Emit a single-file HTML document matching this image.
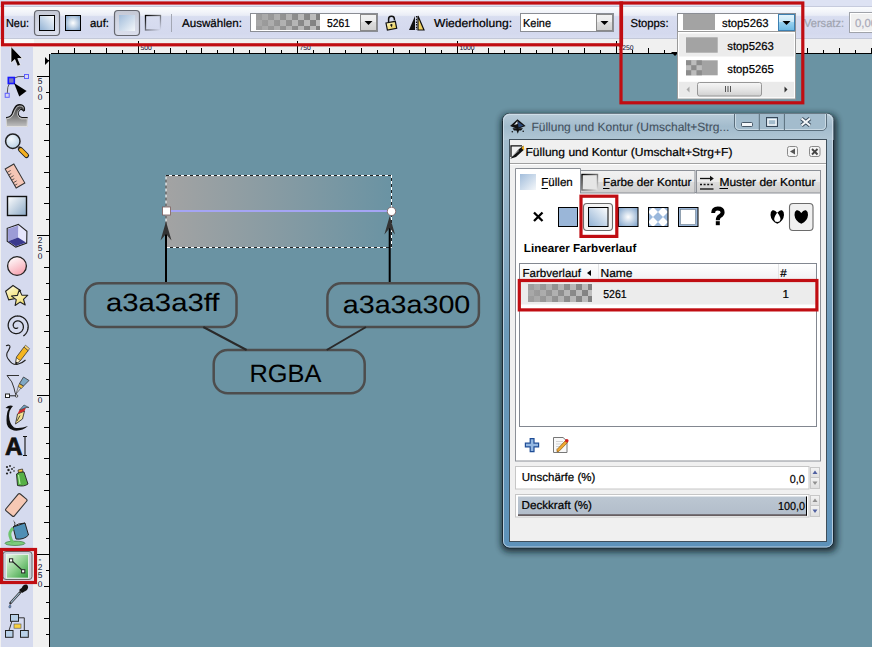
<!DOCTYPE html>
<html><head><meta charset="utf-8"><style>
html,body{margin:0;padding:0;width:872px;height:647px;overflow:hidden;background:#6a93a3;}
svg{display:block;}
</style></head><body>
<svg width="872" height="647" viewBox="0 0 872 647" shape-rendering="auto" text-rendering="geometricPrecision">
<defs>
<linearGradient id="tbg" x1="0" y1="0" x2="0" y2="1">
  <stop offset="0" stop-color="#fafbfd"/><stop offset="0.15" stop-color="#f3f5fa"/>
  <stop offset="0.27" stop-color="#e9ecf6"/><stop offset="0.31" stop-color="#d8ddf0"/>
  <stop offset="0.85" stop-color="#d4d9ee"/><stop offset="1" stop-color="#d8ddf0"/>
</linearGradient>
<linearGradient id="lin" x1="0" y1="1" x2="1" y2="0">
  <stop offset="0" stop-color="#8fb0d3"/><stop offset="1" stop-color="#ffffff"/>
</linearGradient>
<linearGradient id="linsoft" x1="0" y1="0" x2="1" y2="1">
  <stop offset="0" stop-color="#a2bddb"/><stop offset="1" stop-color="#f4f7fa"/>
</linearGradient>
<radialGradient id="rad" cx="0.5" cy="0.5" r="0.6">
  <stop offset="0" stop-color="#ffffff"/><stop offset="1" stop-color="#88a9cd"/>
</radialGradient>
<linearGradient id="pressbtn" x1="0" y1="0" x2="0" y2="1">
  <stop offset="0" stop-color="#c4c8d4"/><stop offset="0.5" stop-color="#d3d7e4"/><stop offset="1" stop-color="#dadeec"/>
</linearGradient>
<linearGradient id="strokeic" x1="0" y1="0" x2="1" y2="1">
  <stop offset="0" stop-color="#000"/><stop offset="1" stop-color="#000" stop-opacity="0"/>
</linearGradient>
<pattern id="chk" x="256" y="14" width="12" height="12" patternUnits="userSpaceOnUse">
  <rect width="12" height="12" fill="#bfbfbf"/><rect width="6" height="6" fill="#808080"/><rect x="6" y="6" width="6" height="6" fill="#808080"/>
</pattern>
<linearGradient id="fadegray" x1="0" y1="0" x2="1" y2="0">
  <stop offset="0" stop-color="#a3a3a3" stop-opacity="0.88"/><stop offset="1" stop-color="#a3a3a3" stop-opacity="0"/>
</linearGradient>
<linearGradient id="objgrad" x1="0" y1="0" x2="1" y2="0">
  <stop offset="0" stop-color="#a3a3a3" stop-opacity="1"/><stop offset="1" stop-color="#a3a3a3" stop-opacity="0"/>
</linearGradient>
<linearGradient id="ddbtn" x1="0" y1="0" x2="0" y2="1">
  <stop offset="0" stop-color="#f2f2f2"/><stop offset="0.5" stop-color="#ebebeb"/><stop offset="0.5" stop-color="#dddddd"/><stop offset="1" stop-color="#cfcfcf"/>
</linearGradient>
<linearGradient id="ddbtnhot" x1="0" y1="0" x2="0" y2="1">
  <stop offset="0" stop-color="#e5f4fc"/><stop offset="0.5" stop-color="#c4e5f6"/><stop offset="0.5" stop-color="#98d1ef"/><stop offset="1" stop-color="#6cb8e4"/>
</linearGradient>
<linearGradient id="title" x1="0" y1="0" x2="0" y2="1">
  <stop offset="0" stop-color="#b9ccd9"/><stop offset="0.5" stop-color="#a2bbcc"/><stop offset="1" stop-color="#b0c6d4"/>
</linearGradient>
<linearGradient id="frameside" x1="0" y1="0" x2="0" y2="1">
  <stop offset="0" stop-color="#a9c0d0"/><stop offset="0.15" stop-color="#9ab6c9"/><stop offset="0.5" stop-color="#6c9aba"/><stop offset="1" stop-color="#5d92ba"/>
</linearGradient>
<linearGradient id="tabbg" x1="0" y1="0" x2="0" y2="1">
  <stop offset="0" stop-color="#f2f2f2"/><stop offset="0.5" stop-color="#ebebeb"/><stop offset="0.5" stop-color="#dddddd"/><stop offset="1" stop-color="#cfcfcf"/>
</linearGradient>
<linearGradient id="hdrbg" x1="0" y1="0" x2="0" y2="1">
  <stop offset="0" stop-color="#ffffff"/><stop offset="1" stop-color="#f1f2f4"/>
</linearGradient>
<linearGradient id="scrthumb" x1="0" y1="0" x2="0" y2="1">
  <stop offset="0" stop-color="#f6f6f6"/><stop offset="0.5" stop-color="#e6e6e6"/><stop offset="1" stop-color="#d0d0d0"/>
</linearGradient>
<linearGradient id="greenic" x1="0" y1="0" x2="1" y2="1">
  <stop offset="0" stop-color="#e8f6e8"/><stop offset="0.5" stop-color="#8fd08f"/><stop offset="1" stop-color="#2f9a3a"/>
</linearGradient>
<linearGradient id="rectg" x1="0" y1="0" x2="1" y2="1">
  <stop offset="0" stop-color="#ffffff"/><stop offset="1" stop-color="#8aa8c6"/>
</linearGradient>
<radialGradient id="lensg" cx="0.4" cy="0.35" r="0.7">
  <stop offset="0" stop-color="#f4f8fc"/><stop offset="1" stop-color="#b8d0e4"/>
</radialGradient>
<linearGradient id="yel2" x1="0" y1="0" x2="0.6" y2="1">
  <stop offset="0" stop-color="#fffce8"/><stop offset="1" stop-color="#f2e070"/>
</linearGradient>
<linearGradient id="waveg" x1="0" y1="0" x2="0" y2="1">
  <stop offset="0" stop-color="#333"/><stop offset="0.5" stop-color="#777"/><stop offset="1" stop-color="#c4c4c4"/>
</linearGradient>
<linearGradient id="boxg" x1="0" y1="0" x2="1" y2="1">
  <stop offset="0" stop-color="#f0f0ff"/><stop offset="0.5" stop-color="#c0c0ec"/><stop offset="1" stop-color="#6060b0"/>
</linearGradient>
<linearGradient id="circg" x1="0.2" y1="0" x2="0.7" y2="1">
  <stop offset="0" stop-color="#ffffff"/><stop offset="1" stop-color="#f6a0ae"/>
</linearGradient>
<linearGradient id="yel" x1="0" y1="0" x2="1" y2="1">
  <stop offset="0" stop-color="#fffbd0"/><stop offset="1" stop-color="#e8c840"/>
</linearGradient>
<linearGradient id="spinbtn" x1="0" y1="0" x2="0" y2="1">
  <stop offset="0" stop-color="#f4f4f4"/><stop offset="1" stop-color="#dedede"/>
</linearGradient>

<filter id="shadow" x="-10%" y="-10%" width="120%" height="120%">
  <feGaussianBlur stdDeviation="3"/>
</filter>
<pattern id="chk6" x="528" y="284" width="12" height="12" patternUnits="userSpaceOnUse">
  <rect width="12" height="12" fill="#bfbfbf"/><rect width="6" height="6" fill="#808080"/><rect x="6" y="6" width="6" height="6" fill="#808080"/>
</pattern>
<linearGradient id="fadegray2" x1="0" y1="0" x2="1" y2="0">
  <stop offset="0" stop-color="#a3a3a3" stop-opacity="0.88"/><stop offset="1" stop-color="#a3a3a3" stop-opacity="0"/>
</linearGradient>
<pattern id="diam" x="648" y="207" width="10" height="10" patternUnits="userSpaceOnUse">
  <rect width="10" height="10" fill="#9ab8dc"/><path d="M5 0 L10 5 L5 10 L0 5 Z" fill="#fff"/>
</pattern>
<linearGradient id="deckbar" x1="0" y1="0" x2="0" y2="1">
  <stop offset="0" stop-color="#bcc7d2"/><stop offset="1" stop-color="#b2bdca"/>
</linearGradient>
</defs>
<rect x="0" y="0" width="872" height="647" fill="#6a93a3" />
<rect x="0" y="0" width="872" height="6" fill="#dde2f3" />
<rect x="0" y="6" width="872" height="1" fill="#c6cbdd" />
<rect x="0" y="7" width="872" height="31" fill="url(#tbg)" />
<rect x="0" y="38" width="872" height="1" fill="#c3c8d8" />
<rect x="0" y="39" width="872" height="15" fill="#f0f0f0" />
<rect x="0" y="39" width="34" height="8" fill="#fafafa" />
<text x="6" y="27" font-family="'Liberation Sans', sans-serif" font-size="11.5" fill="#000" font-weight="normal" text-anchor="start" textLength="23" lengthAdjust="spacingAndGlyphs" stroke="#000" stroke-width="0.22">Neu:</text>
<rect x="34.5" y="10.5" width="25" height="25" rx="3.5" fill="url(#pressbtn)" stroke="#65676f" stroke-width="1.2"/>
<rect x="39.5" y="15.5" width="15" height="15" fill="url(#lin)" stroke="#000" stroke-width="1"/>
<rect x="65.5" y="15.5" width="15" height="15" fill="url(#rad)" stroke="#000" stroke-width="1"/>
<text x="90" y="27" font-family="'Liberation Sans', sans-serif" font-size="11.5" fill="#000" font-weight="normal" text-anchor="start" textLength="19" lengthAdjust="spacingAndGlyphs" stroke="#000" stroke-width="0.22">auf:</text>
<rect x="114.5" y="10.5" width="25" height="25" rx="3.5" fill="url(#pressbtn)" stroke="#65676f" stroke-width="1.2"/>
<rect x="119" y="15" width="16" height="16" fill="url(#linsoft)"/>
<rect x="145.5" y="15.5" width="15" height="14.5" fill="none" stroke="url(#strokeic)" stroke-width="1.3"/>
<rect x="171" y="14" width="1" height="18" fill="#a3a7b3" />
<text x="182" y="27" font-family="'Liberation Sans', sans-serif" font-size="11.5" fill="#000" font-weight="normal" text-anchor="start" textLength="60" lengthAdjust="spacingAndGlyphs" stroke="#000" stroke-width="0.22">Auswählen:</text>
<rect x="250.5" y="13.5" width="127" height="18" fill="#fff" stroke="#8a8d94" stroke-width="1"/>
<rect x="256" y="14" width="64" height="16" fill="url(#chk)"/>
<rect x="256" y="14" width="64" height="16" fill="url(#fadegray)"/>
<text x="327" y="27" font-family="'Liberation Sans', sans-serif" font-size="11.5" fill="#000" font-weight="normal" text-anchor="start" textLength="23" lengthAdjust="spacingAndGlyphs" stroke="#000" stroke-width="0.22">5261</text>
<rect x="360.5" y="14.5" width="16" height="16" fill="url(#ddbtn)" stroke="#8a8a8a" stroke-width="1"/>
<path d="M364.5 21 h8 l-4 4 z" fill="#000"/>
<path d="M388.6 22.3 V19.2 a2.9 2.9 0 0 1 5.8 -0.3 V20.2" fill="none" stroke="#111" stroke-width="1.5"/>
<path d="M386 23 L395.3 21.3 L396.7 28.3 L387.4 30 Z" fill="url(#yel)" stroke="#111" stroke-width="1.2"/>
<circle cx="391.4" cy="25" r="1.1" fill="#111"/><path d="M391.2 25 L391.8 27.2" stroke="#111" stroke-width="0.9"/>
<path d="M409 30 L415 16 L415 30 z" fill="#111"/>
<path d="M418 30 L418 16 L424 30 z" fill="#f0d060" stroke="#111" stroke-width="1.2"/>
<line x1="416.5" y1="16" x2="416.5" y2="30" stroke="#111" stroke-width="1.2" stroke-dasharray="1.5 1.2"/>
<text x="434" y="27" font-family="'Liberation Sans', sans-serif" font-size="11.5" fill="#000" font-weight="normal" text-anchor="start" textLength="78" lengthAdjust="spacingAndGlyphs" stroke="#000" stroke-width="0.22">Wiederholung:</text>
<rect x="520.5" y="13.5" width="93" height="18" fill="#fff" stroke="#8a8d94" stroke-width="1"/>
<text x="523" y="27" font-family="'Liberation Sans', sans-serif" font-size="11.5" fill="#000" font-weight="normal" text-anchor="start" textLength="28" lengthAdjust="spacingAndGlyphs" stroke="#000" stroke-width="0.22">Keine</text>
<rect x="596.5" y="14.5" width="16" height="16" fill="url(#ddbtn)" stroke="#8a8a8a" stroke-width="1"/>
<path d="M600.5 21 h8 l-4 4 z" fill="#000"/>
<text x="630.5" y="27" font-family="'Liberation Sans', sans-serif" font-size="11.5" fill="#000" font-weight="normal" text-anchor="start" textLength="38" lengthAdjust="spacingAndGlyphs" stroke="#000" stroke-width="0.22">Stopps:</text>
<rect x="677.5" y="13.5" width="118" height="18" fill="#fff" stroke="#8a8d94" stroke-width="1"/>
<rect x="683" y="14" width="32" height="16" fill="#a3a3a3" />
<text x="722" y="27" font-family="'Liberation Sans', sans-serif" font-size="11.5" fill="#000" font-weight="normal" text-anchor="start" textLength="46.5" lengthAdjust="spacingAndGlyphs" stroke="#000" stroke-width="0.22">stop5263</text>
<rect x="778.5" y="14.5" width="16" height="16" fill="url(#ddbtnhot)" stroke="#3c7fb1" stroke-width="1"/>
<path d="M782.5 21 h8 l-4 4 z" fill="#000"/>
<text x="804" y="27" font-family="'Liberation Sans', sans-serif" font-size="11.5" fill="#a0a4b0" font-weight="normal" text-anchor="start" textLength="40" lengthAdjust="spacingAndGlyphs" stroke="#a0a4b0" stroke-width="0.22">Versatz:</text>
<rect x="849.5" y="12.5" width="40" height="20" fill="#f0f0f0" stroke="#a0a3aa" stroke-width="1"/>
<rect x="850.5" y="13.5" width="40" height="18" fill="none" stroke="#fff" stroke-width="1"/>
<text x="855" y="27" font-family="'Liberation Sans', sans-serif" font-size="11.5" fill="#a9a9b9" font-weight="normal" text-anchor="start" textLength="22" lengthAdjust="spacingAndGlyphs" stroke="#a9a9b9" stroke-width="0.22">0,00</text>
<rect x="51" y="53" width="821" height="1" fill="#000" />
<line x1="58.5" y1="50" x2="58.5" y2="53" stroke="#000" stroke-width="1" />
<line x1="74.5" y1="48" x2="74.5" y2="53" stroke="#000" stroke-width="1" />
<line x1="90.5" y1="50" x2="90.5" y2="53" stroke="#000" stroke-width="1" />
<line x1="106.5" y1="48" x2="106.5" y2="53" stroke="#000" stroke-width="1" />
<line x1="122.5" y1="50" x2="122.5" y2="53" stroke="#000" stroke-width="1" />
<line x1="138.5" y1="41" x2="138.5" y2="53" stroke="#000" stroke-width="1" />
<text x="140.5" y="50" font-family="'Liberation Sans', sans-serif" font-size="6.8" fill="#101030" font-weight="normal" text-anchor="start" stroke="#101030" stroke-width="0.05">500</text>
<line x1="154.5" y1="50" x2="154.5" y2="53" stroke="#000" stroke-width="1" />
<line x1="170.5" y1="48" x2="170.5" y2="53" stroke="#000" stroke-width="1" />
<line x1="186.5" y1="50" x2="186.5" y2="53" stroke="#000" stroke-width="1" />
<line x1="201.5" y1="48" x2="201.5" y2="53" stroke="#000" stroke-width="1" />
<line x1="217.5" y1="50" x2="217.5" y2="53" stroke="#000" stroke-width="1" />
<line x1="233.5" y1="48" x2="233.5" y2="53" stroke="#000" stroke-width="1" />
<line x1="249.5" y1="50" x2="249.5" y2="53" stroke="#000" stroke-width="1" />
<line x1="265.5" y1="48" x2="265.5" y2="53" stroke="#000" stroke-width="1" />
<line x1="281.5" y1="50" x2="281.5" y2="53" stroke="#000" stroke-width="1" />
<line x1="297.5" y1="41" x2="297.5" y2="53" stroke="#000" stroke-width="1" />
<text x="299.5" y="50" font-family="'Liberation Sans', sans-serif" font-size="6.8" fill="#101030" font-weight="normal" text-anchor="start" stroke="#101030" stroke-width="0.05">750</text>
<line x1="313.5" y1="50" x2="313.5" y2="53" stroke="#000" stroke-width="1" />
<line x1="329.5" y1="48" x2="329.5" y2="53" stroke="#000" stroke-width="1" />
<line x1="345.5" y1="50" x2="345.5" y2="53" stroke="#000" stroke-width="1" />
<line x1="361.5" y1="48" x2="361.5" y2="53" stroke="#000" stroke-width="1" />
<line x1="377.5" y1="50" x2="377.5" y2="53" stroke="#000" stroke-width="1" />
<line x1="393.5" y1="48" x2="393.5" y2="53" stroke="#000" stroke-width="1" />
<line x1="409.5" y1="50" x2="409.5" y2="53" stroke="#000" stroke-width="1" />
<line x1="425.5" y1="48" x2="425.5" y2="53" stroke="#000" stroke-width="1" />
<line x1="441.5" y1="50" x2="441.5" y2="53" stroke="#000" stroke-width="1" />
<line x1="457.5" y1="41" x2="457.5" y2="53" stroke="#000" stroke-width="1" />
<text x="459.5" y="50" font-family="'Liberation Sans', sans-serif" font-size="6.8" fill="#101030" font-weight="normal" text-anchor="start" stroke="#101030" stroke-width="0.05">1000</text>
<line x1="472.5" y1="50" x2="472.5" y2="53" stroke="#000" stroke-width="1" />
<line x1="488.5" y1="48" x2="488.5" y2="53" stroke="#000" stroke-width="1" />
<line x1="504.5" y1="50" x2="504.5" y2="53" stroke="#000" stroke-width="1" />
<line x1="520.5" y1="48" x2="520.5" y2="53" stroke="#000" stroke-width="1" />
<line x1="536.5" y1="50" x2="536.5" y2="53" stroke="#000" stroke-width="1" />
<line x1="552.5" y1="48" x2="552.5" y2="53" stroke="#000" stroke-width="1" />
<line x1="568.5" y1="50" x2="568.5" y2="53" stroke="#000" stroke-width="1" />
<line x1="584.5" y1="48" x2="584.5" y2="53" stroke="#000" stroke-width="1" />
<line x1="600.5" y1="50" x2="600.5" y2="53" stroke="#000" stroke-width="1" />
<line x1="616.5" y1="41" x2="616.5" y2="53" stroke="#000" stroke-width="1" />
<text x="618.5" y="50" font-family="'Liberation Sans', sans-serif" font-size="6.8" fill="#101030" font-weight="normal" text-anchor="start" stroke="#101030" stroke-width="0.05">1250</text>
<line x1="632.5" y1="50" x2="632.5" y2="53" stroke="#000" stroke-width="1" />
<line x1="648.5" y1="48" x2="648.5" y2="53" stroke="#000" stroke-width="1" />
<line x1="664.5" y1="50" x2="664.5" y2="53" stroke="#000" stroke-width="1" />
<line x1="680.5" y1="48" x2="680.5" y2="53" stroke="#000" stroke-width="1" />
<line x1="696.5" y1="50" x2="696.5" y2="53" stroke="#000" stroke-width="1" />
<line x1="712.5" y1="48" x2="712.5" y2="53" stroke="#000" stroke-width="1" />
<line x1="727.5" y1="50" x2="727.5" y2="53" stroke="#000" stroke-width="1" />
<line x1="743.5" y1="48" x2="743.5" y2="53" stroke="#000" stroke-width="1" />
<line x1="759.5" y1="50" x2="759.5" y2="53" stroke="#000" stroke-width="1" />
<line x1="775.5" y1="41" x2="775.5" y2="53" stroke="#000" stroke-width="1" />
<text x="777.5" y="50" font-family="'Liberation Sans', sans-serif" font-size="6.8" fill="#101030" font-weight="normal" text-anchor="start" stroke="#101030" stroke-width="0.05">1500</text>
<line x1="791.5" y1="50" x2="791.5" y2="53" stroke="#000" stroke-width="1" />
<line x1="807.5" y1="48" x2="807.5" y2="53" stroke="#000" stroke-width="1" />
<line x1="823.5" y1="50" x2="823.5" y2="53" stroke="#000" stroke-width="1" />
<line x1="839.5" y1="48" x2="839.5" y2="53" stroke="#000" stroke-width="1" />
<line x1="855.5" y1="50" x2="855.5" y2="53" stroke="#000" stroke-width="1" />
<line x1="871.5" y1="48" x2="871.5" y2="53" stroke="#000" stroke-width="1" />
<path d="M671 52 h8 l-4 4 z" fill="#000"/>
<rect x="33" y="54" width="17" height="593" fill="#f0f0f0" />
<rect x="49" y="54" width="1" height="593" fill="#000" />
<line x1="46" y1="60.5" x2="49" y2="60.5" stroke="#000" stroke-width="1" />
<line x1="37" y1="76.5" x2="49" y2="76.5" stroke="#000" stroke-width="1" />
<text x="40" y="83.7" font-family="'Liberation Sans', sans-serif" font-size="8.3" fill="#101030" font-weight="normal" text-anchor="middle" stroke="#101030" stroke-width="0.05">5</text>
<text x="40" y="92.05" font-family="'Liberation Sans', sans-serif" font-size="8.3" fill="#101030" font-weight="normal" text-anchor="middle" stroke="#101030" stroke-width="0.05">0</text>
<text x="40" y="100.4" font-family="'Liberation Sans', sans-serif" font-size="8.3" fill="#101030" font-weight="normal" text-anchor="middle" stroke="#101030" stroke-width="0.05">0</text>
<line x1="46" y1="92.5" x2="49" y2="92.5" stroke="#000" stroke-width="1" />
<line x1="44" y1="108.5" x2="49" y2="108.5" stroke="#000" stroke-width="1" />
<line x1="46" y1="124.5" x2="49" y2="124.5" stroke="#000" stroke-width="1" />
<line x1="44" y1="140.5" x2="49" y2="140.5" stroke="#000" stroke-width="1" />
<line x1="46" y1="156.5" x2="49" y2="156.5" stroke="#000" stroke-width="1" />
<line x1="44" y1="172.5" x2="49" y2="172.5" stroke="#000" stroke-width="1" />
<line x1="46" y1="187.5" x2="49" y2="187.5" stroke="#000" stroke-width="1" />
<line x1="44" y1="203.5" x2="49" y2="203.5" stroke="#000" stroke-width="1" />
<line x1="46" y1="219.5" x2="49" y2="219.5" stroke="#000" stroke-width="1" />
<line x1="37" y1="235.5" x2="49" y2="235.5" stroke="#000" stroke-width="1" />
<text x="40" y="242.7" font-family="'Liberation Sans', sans-serif" font-size="8.3" fill="#101030" font-weight="normal" text-anchor="middle" stroke="#101030" stroke-width="0.05">2</text>
<text x="40" y="251.04999999999998" font-family="'Liberation Sans', sans-serif" font-size="8.3" fill="#101030" font-weight="normal" text-anchor="middle" stroke="#101030" stroke-width="0.05">5</text>
<text x="40" y="259.4" font-family="'Liberation Sans', sans-serif" font-size="8.3" fill="#101030" font-weight="normal" text-anchor="middle" stroke="#101030" stroke-width="0.05">0</text>
<line x1="46" y1="251.5" x2="49" y2="251.5" stroke="#000" stroke-width="1" />
<line x1="44" y1="267.5" x2="49" y2="267.5" stroke="#000" stroke-width="1" />
<line x1="46" y1="283.5" x2="49" y2="283.5" stroke="#000" stroke-width="1" />
<line x1="44" y1="299.5" x2="49" y2="299.5" stroke="#000" stroke-width="1" />
<line x1="46" y1="315.5" x2="49" y2="315.5" stroke="#000" stroke-width="1" />
<line x1="44" y1="331.5" x2="49" y2="331.5" stroke="#000" stroke-width="1" />
<line x1="46" y1="347.5" x2="49" y2="347.5" stroke="#000" stroke-width="1" />
<line x1="44" y1="363.5" x2="49" y2="363.5" stroke="#000" stroke-width="1" />
<line x1="46" y1="379.5" x2="49" y2="379.5" stroke="#000" stroke-width="1" />
<line x1="37" y1="395.5" x2="49" y2="395.5" stroke="#000" stroke-width="1" />
<text x="40" y="402.7" font-family="'Liberation Sans', sans-serif" font-size="8.3" fill="#101030" font-weight="normal" text-anchor="middle" stroke="#101030" stroke-width="0.05">0</text>
<line x1="46" y1="411.5" x2="49" y2="411.5" stroke="#000" stroke-width="1" />
<line x1="44" y1="427.5" x2="49" y2="427.5" stroke="#000" stroke-width="1" />
<line x1="46" y1="443.5" x2="49" y2="443.5" stroke="#000" stroke-width="1" />
<line x1="44" y1="458.5" x2="49" y2="458.5" stroke="#000" stroke-width="1" />
<line x1="46" y1="474.5" x2="49" y2="474.5" stroke="#000" stroke-width="1" />
<line x1="44" y1="490.5" x2="49" y2="490.5" stroke="#000" stroke-width="1" />
<line x1="46" y1="506.5" x2="49" y2="506.5" stroke="#000" stroke-width="1" />
<line x1="44" y1="522.5" x2="49" y2="522.5" stroke="#000" stroke-width="1" />
<line x1="46" y1="538.5" x2="49" y2="538.5" stroke="#000" stroke-width="1" />
<line x1="37" y1="554.5" x2="49" y2="554.5" stroke="#000" stroke-width="1" />
<text x="40" y="561.7" font-family="'Liberation Sans', sans-serif" font-size="8.3" fill="#101030" font-weight="normal" text-anchor="middle" stroke="#101030" stroke-width="0.05">-</text>
<text x="40" y="570.0500000000001" font-family="'Liberation Sans', sans-serif" font-size="8.3" fill="#101030" font-weight="normal" text-anchor="middle" stroke="#101030" stroke-width="0.05">2</text>
<text x="40" y="578.4000000000001" font-family="'Liberation Sans', sans-serif" font-size="8.3" fill="#101030" font-weight="normal" text-anchor="middle" stroke="#101030" stroke-width="0.05">5</text>
<text x="40" y="586.75" font-family="'Liberation Sans', sans-serif" font-size="8.3" fill="#101030" font-weight="normal" text-anchor="middle" stroke="#101030" stroke-width="0.05">0</text>
<line x1="46" y1="570.5" x2="49" y2="570.5" stroke="#000" stroke-width="1" />
<line x1="44" y1="586.5" x2="49" y2="586.5" stroke="#000" stroke-width="1" />
<line x1="46" y1="602.5" x2="49" y2="602.5" stroke="#000" stroke-width="1" />
<line x1="44" y1="618.5" x2="49" y2="618.5" stroke="#000" stroke-width="1" />
<line x1="46" y1="634.5" x2="49" y2="634.5" stroke="#000" stroke-width="1" />
<path d="M45 57 v8 l4 -4 z" fill="#000"/>
<rect x="1" y="47" width="32" height="600" fill="#d5daee" />
<rect x="0" y="47" width="1" height="600" fill="#f0f0f0" />
<path d="M11 46.5 L11 63 L14.8 59.5 L17.5 66.2 L20.5 65 L17.8 58.5 L22.5 58.5 Z" fill="#000" stroke="#fff" stroke-width="0.7"/>
<path d="M12 79 Q18 75.5 24.5 76.5" fill="none" stroke="#555" stroke-width="1"/>
<path d="M10 82 Q7 87 7.3 93" fill="none" stroke="#555" stroke-width="1"/>
<rect x="8.3" y="77.5" width="6" height="6" fill="#7a7ac0" stroke="#1818ff" stroke-width="1.6"/>
<rect x="24.5" y="74.5" width="4" height="4" fill="#d8d8ee" stroke="#6060ff" stroke-width="1"/>
<rect x="5.2" y="93.3" width="4" height="4" fill="#d8d8ee" stroke="#6060ff" stroke-width="1"/>
<path d="M14 83 L26.6 91.1 L19.3 96.5 Z" fill="#000"/>
<path d="M6 127 V117.5 Q10 117.5 12 114 Q14 108 16.5 105.5 Q19 104 22 105 Q25 106.5 24.5 110.5 L23.5 111 Q21.5 108.5 19.5 110 Q17.5 112 18.5 115 Q19.5 117.5 22 117.5 H27.6 V127 Z" fill="url(#waveg)"/>
<path d="M6 117.5 Q10 117.5 12 114 Q14 108 16.5 105.5 Q19 104 22 105 Q25 106.5 24.5 110.5 L23.5 111 Q21.5 108.5 19.5 110 Q17.5 112 18.5 115 Q19.5 117.5 22 117.5 H27.6" fill="none" stroke="#111" stroke-width="1.1"/><path d="M6.5 126.5 H27.2 V118.5 M6.5 126.5 V118.5" fill="none" stroke="#fff" stroke-width="0.6" opacity="0.8"/>
<path d="M7 118.8 Q11 118.5 13 115 Q15 109 17.2 106.8 Q19.5 105.5 22 106.3 Q23.3 107 23.6 108.5 M20.5 108.8 Q17 110.5 17.5 114.5 Q18.3 118 21.5 118.8 H27" fill="none" stroke="#fff" stroke-width="0.7" opacity="0.85"/>
<circle cx="12.8" cy="141.2" r="7.2" fill="url(#lensg)" stroke="#222" stroke-width="1.5"/>
<path d="M18.5 147 L20 148.5" stroke="#555" stroke-width="3"/><path d="M20.5 149.5 L26.5 155.5" stroke="#222" stroke-width="5.2" stroke-linecap="round"/>
<path d="M20.8 149.8 L26.3 155.3" stroke="#f4b020" stroke-width="3.4" stroke-linecap="round"/>
<g transform="translate(15,176) rotate(-30)"><rect x="-5" y="-11" width="10" height="22" fill="#f6c6b6" stroke="#333" stroke-width="1"/><path d="M-5 -7 h4 M-5 -4 h3 M-5 -1 h4 M-5 2 h3 M-5 5 h4 M-5 8 h3" stroke="#333" stroke-width="0.7"/></g>
<rect x="7.5" y="196.5" width="19" height="19" fill="url(#rectg)" stroke="#111" stroke-width="1.4"/>
<path d="M18.4 224.4 L26.9 231.3 L26.7 243.1 L15.8 247.1 L7.2 241.3 L7.2 228.3 Z" fill="#e6e6fc" stroke="#222" stroke-width="1.1"/>
<path d="M8 229 L18.2 225.5 L18 237.4 L8.2 241.2 Z" fill="#9c9cd6"/>
<path d="M18 237.4 L8.2 241.2 L15.8 246.3 L26 242.6 Z" fill="#3a3a8e"/>
<circle cx="17" cy="266" r="9.4" fill="url(#circg)" stroke="#222" stroke-width="1.3"/>
<path d="M13 285.5 L20.5 290.5 L18 298 L8.7 299.9 L5.6 291.2 Z" fill="url(#yel2)" stroke="#222" stroke-width="1.1"/>
<path d="M19.35 289.71 L21.87 295.11 L27.83 295.22 L23.47 299.28 L25.21 304.98 L20.00 302.09 L15.12 305.51 L16.25 299.66 L11.49 296.07 L17.41 295.35 Z" fill="url(#yel2)" stroke="#222" stroke-width="1.1" stroke-linejoin="round"/>
<path d="M17.85 327.36 L17.80 327.50 L17.72 327.63 L17.64 327.75 L17.53 327.86 L17.42 327.97 L17.29 328.06 L17.15 328.15 L17.00 328.22 L16.84 328.29 L16.67 328.34 L16.49 328.38 L16.31 328.40 L16.12 328.41 L15.93 328.41 L15.73 328.38 L15.53 328.35 L15.34 328.29 L15.14 328.22 L14.94 328.13 L14.75 328.02 L14.57 327.90 L14.39 327.76 L14.21 327.61 L14.05 327.44 L13.90 327.25 L13.76 327.05 L13.64 326.84 L13.52 326.61 L13.43 326.38 L13.35 326.13 L13.29 325.87 L13.24 325.61 L13.22 325.33 L13.22 325.06 L13.23 324.78 L13.27 324.49 L13.33 324.21 L13.41 323.93 L13.52 323.65 L13.64 323.38 L13.79 323.11 L13.96 322.85 L14.15 322.60 L14.36 322.36 L14.58 322.13 L14.83 321.92 L15.10 321.73 L15.38 321.55 L15.68 321.39 L15.99 321.25 L16.32 321.14 L16.65 321.04 L17.00 320.97 L17.35 320.93 L17.72 320.91 L18.08 320.91 L18.45 320.94 L18.82 321.00 L19.19 321.09 L19.55 321.20 L19.91 321.34 L20.26 321.51 L20.60 321.71 L20.93 321.93 L21.25 322.17 L21.55 322.44 L21.84 322.74 L22.10 323.06 L22.34 323.39 L22.57 323.75 L22.76 324.13 L22.93 324.52 L23.08 324.93 L23.19 325.35 L23.28 325.78 L23.34 326.22 L23.36 326.67 L23.35 327.12 L23.32 327.57 L23.24 328.03 L23.14 328.48 L23.00 328.93 L22.83 329.37 L22.63 329.80 L22.39 330.21 L22.13 330.62 L21.83 331.00 L21.51 331.37 L21.15 331.72 L20.77 332.04 L20.37 332.33 L19.94 332.60 L19.49 332.85 L19.02 333.06 L18.54 333.23 L18.04 333.38 L17.52 333.49 L17.00 333.56 L16.47 333.60 L15.93 333.59 L15.39 333.55 L14.86 333.48 L14.32 333.36 L13.79 333.20 L13.27 333.01 L12.76 332.78 L12.27 332.51 L11.79 332.21 L11.33 331.87 L10.90 331.50 L10.49 331.09 L10.10 330.65 L9.75 330.19 L9.42 329.69 L9.14 329.18 L8.88 328.64 L8.67 328.08 L8.49 327.50 L8.35 326.91 L8.25 326.31 L8.20 325.69 L8.19 325.07 L8.22 324.45 L8.30 323.83 L8.42 323.21 L8.59 322.60 L8.80 322.00 L9.05 321.41 L9.35 320.84 L9.68 320.28 L10.06 319.75 L10.48 319.24 L10.93 318.77 L11.42 318.32 L11.94 317.90 L12.49 317.52 L13.07 317.18 L13.68 316.88 L14.31 316.62 L14.96 316.40 L15.63 316.23 L16.31 316.10 L17.00 316.03 L17.70 316.00 L18.40 316.02 L19.11 316.09 L19.81 316.21 L20.50 316.38 L21.18 316.60 L21.85 316.87 L22.51 317.19 L23.14 317.55 L23.75 317.96 L24.33 318.41 L24.88 318.91 L25.40 319.44 L25.88 320.01 L26.32 320.62 L26.72 321.26 L27.07 321.93 L27.38 322.63 L27.64 323.35 L27.85 324.09 L28.01 324.84 L28.12 325.61 L28.17 326.39 L28.17 327.17 L28.11 327.96 L28.00 328.74 L27.83 329.52 L27.60 330.28 L27.32 331.04 L26.99 331.77 L26.61 332.48 L26.17 333.17 L25.69 333.82 L25.16 334.45 L24.58 335.04 L23.96 335.59 L23.31 336.09" fill="none" stroke="#1a1a1a" stroke-width="1.25"/>
<path d="M6 345.8 Q10 344 10 347 Q9 350 7 353 Q6 357 9 360 Q12 365 17 364.5 Q22 363.5 25.5 360" fill="none" stroke="#222" stroke-width="1.1"/>
<path d="M15.5 364.5 L16.5 357 L24 347 L28.2 350.5 L20.5 360.5 Z" fill="#f4b520" stroke="#333" stroke-width="0.8"/>
<path d="M15.5 364.5 L16.5 357.5 Q18.5 360 20.5 360.5 Z" fill="#fff4d0" stroke="#333" stroke-width="0.6"/>
<path d="M15.5 364.5 L16 361.8 L18 362.8 Z" fill="#111"/>
<path d="M24 347 L25.5 345.2 L29.5 348.6 L28.2 350.5 Z" fill="#ffd870" stroke="#333" stroke-width="0.6"/>
<path d="M7 375.5 H19 M7 375.5 Q13 382 14 388 Q15 393 16 395" fill="none" stroke="#333" stroke-width="1"/>
<rect x="5.5" y="394" width="4" height="3.5" fill="#fff" stroke="#222" stroke-width="1"/>
<path d="M9.5 395.8 H16" stroke="#222" stroke-width="1"/><circle cx="16.6" cy="396" r="1.2" fill="#fff" stroke="#222" stroke-width="0.8"/>
<path d="M16 394 L18.5 386 L21 388 Z" fill="#ddd" stroke="#333" stroke-width="0.6"/>
<path d="M18.2 386.5 L19.5 383.5 L23.5 386 L21.5 388.5 Z" fill="#f0c040" stroke="#333" stroke-width="0.6"/>
<path d="M19.5 383.5 L23.5 377 L29 380.5 L23.5 386 Z" fill="#7fa8c4" stroke="#333" stroke-width="0.8"/>
<path d="M5.5 408 Q9 404.5 13 406 Q9 410 9 416 Q9.5 424 14 427.5 Q20 429 28 426 Q22 431.5 14 430.5 Q6 429 6.5 420 Q6.5 412 9 408.5 Q7.5 408 5.5 408 Z" fill="#111"/>
<path d="M15.5 424 L17.5 414 L24.5 411 L22.5 419 Z" fill="#f4e090" stroke="#222" stroke-width="0.8"/>
<path d="M17 421 L20 415.5" stroke="#222" stroke-width="0.8"/>
<path d="M17.5 414 L19.5 410 L26 407.5 L24.5 411 Z" fill="#d02828"/>
<path d="M19.5 410 L24 405 L29 407.5 L26 407.5 Z" fill="#6f9fc0" stroke="#333" stroke-width="0.6"/>
<text x="5" y="455.3" font-family="'Liberation Sans', sans-serif" font-size="25" fill="#111" font-weight="bold" text-anchor="start" textLength="17.5" lengthAdjust="spacingAndGlyphs" stroke="#111" stroke-width="0.7">A</text>
<path d="M25 436.5 v19 M23 436.5 h4 M23 455.5 h4" stroke="#111" stroke-width="1.1"/>
<circle cx="7" cy="467" r="1.1" fill="#222"/>
<circle cx="10" cy="466" r="0.9" fill="#222"/>
<circle cx="8.5" cy="470" r="1.2" fill="#222"/>
<circle cx="12" cy="469" r="0.9" fill="#222"/>
<circle cx="7" cy="473.5" r="1.1" fill="#222"/>
<circle cx="10.5" cy="472.5" r="0.9" fill="#222"/>
<circle cx="14" cy="467.5" r="0.7" fill="#222"/>
<circle cx="14" cy="471" r="0.8" fill="#222"/>
<path d="M18 470 L22.5 469 L23 472 L18.5 473 Z" fill="#f0c040" stroke="#222" stroke-width="0.7"/>
<path d="M16.5 474 Q19 471.5 24 472 L28 484 Q24 487 17.5 485.5 Z" fill="#56b046" stroke="#222" stroke-width="0.9"/>
<path d="M18.5 475 L20 484" stroke="#b8f0a8" stroke-width="1.2"/>
<g transform="translate(16.3,505) rotate(40)"><rect x="-5.5" y="-11" width="11" height="22" rx="1.5" fill="#f6c8b4" stroke="#333" stroke-width="1.1"/></g>
<ellipse cx="15" cy="543.3" rx="10" ry="2.2" fill="#7ccc7c" stroke="#2a6a2a" stroke-width="0.6"/>
<path d="M13 527 L25 523 L28.5 535 Q24 540 16 539 Z" fill="#4f8fb5" stroke="#222" stroke-width="1"/>
<path d="M13 527 Q18 523 25 523" fill="none" stroke="#222" stroke-width="1"/>
<path d="M14 527 Q16 522.5 13.5 521" fill="none" stroke="#333" stroke-width="0.9"/>
<path d="M13 528 Q9 532 10 536 Q11 540 13 543" fill="none" stroke="#6cc46c" stroke-width="3"/>
<rect x="3" y="551.5" width="29" height="28" rx="3" fill="#c9cdd9" stroke="#666" stroke-width="1"/>
<rect x="6.5" y="554.6" width="22" height="23.5" fill="url(#greenic)" stroke="#f0f8f0" stroke-width="0.8"/>
<line x1="12" y1="561" x2="22.5" y2="570.5" stroke="#222" stroke-width="1.1"/>
<rect x="9.5" y="558.8" width="3.2" height="3.2" fill="#fff" stroke="#222" stroke-width="1"/>
<rect x="21.6" y="569.7" width="3.2" height="3.2" fill="#fff" stroke="#222" stroke-width="1"/>
<path d="M10.5 603 L20 592.5" stroke="#333" stroke-width="2.6" stroke-linecap="round"/>
<path d="M11 602.5 L19.5 593" stroke="#a8c8e0" stroke-width="1.1"/>
<path d="M19 590 L22 593 L24.5 591.5 L21.5 588 Z" fill="#111"/>
<path d="M21.5 588.5 Q23 584 26.5 584.5 Q29.5 586.5 27 590 Q25 591.5 23.5 591.5 Z" fill="#111"/>
<path d="M10 604.5 Q8 607 9.3 608 Q11 608.5 11 606 Z" fill="#6a9ac0" stroke="#335" stroke-width="0.5"/>
<path d="M12 621 L9 630.5 M18.5 617.8 H24.3 V630.5" fill="none" stroke="#222" stroke-width="0.9"/>
<rect x="10.5" y="614.5" width="8" height="6.8" fill="#b8d0e8" stroke="#222" stroke-width="1"/>
<rect x="14" y="624" width="7" height="4.2" fill="#f8d040" stroke="#555" stroke-width="0.6"/>
<rect x="5.5" y="630.5" width="7.5" height="6.8" fill="#b8d0e8" stroke="#222" stroke-width="1"/>
<rect x="20.5" y="630.5" width="7.8" height="6.8" fill="#b8d0e8" stroke="#222" stroke-width="1"/>
<rect x="166" y="175.5" width="225.5" height="72" fill="url(#objgrad)"/>
<rect x="166" y="175.5" width="225.5" height="72" fill="none" stroke="#fff" stroke-width="1"/>
<rect x="166" y="175.5" width="225.5" height="72" fill="none" stroke="#222" stroke-width="1" stroke-dasharray="3 3"/>
<line x1="166" y1="211" x2="391" y2="211" stroke="#a5a5f5" stroke-width="2"/>
<rect x="162.5" y="207" width="8" height="8" fill="#fff" stroke="#7a5a5a" stroke-width="0.8"/>
<circle cx="391.5" cy="211.4" r="4.2" fill="#fff" stroke="#7a5a5a" stroke-width="0.8"/>
<line x1="166" y1="230" x2="166" y2="282" stroke="#000" stroke-width="2"/>
<path d="M166 221.5 L171.5 240.5 L166 234 L160.5 240.5 Z" fill="#333"/>
<line x1="389.7" y1="224" x2="389.7" y2="282" stroke="#000" stroke-width="2"/>
<path d="M389.7 216 L395 234.5 L389.7 228 L384.4 234.5 Z" fill="#333"/>
<rect x="85" y="283.2" width="151.5" height="43.8" rx="14" fill="none" stroke="#4d4d4d" stroke-width="2.5"/>
<rect x="327.4" y="283.2" width="151.5" height="43.8" rx="14" fill="none" stroke="#4d4d4d" stroke-width="2.5"/>
<rect x="213.7" y="350" width="151" height="43.2" rx="14" fill="none" stroke="#4d4d4d" stroke-width="2.5"/>
<text x="106" y="311" font-family="'Liberation Sans', sans-serif" font-size="25" fill="#000" font-weight="normal" text-anchor="start" textLength="113.5" lengthAdjust="spacingAndGlyphs" stroke="#000" stroke-width="0.08">a3a3a3ff</text>
<text x="342.8" y="312.5" font-family="'Liberation Sans', sans-serif" font-size="25" fill="#000" font-weight="normal" text-anchor="start" textLength="127.5" lengthAdjust="spacingAndGlyphs" stroke="#000" stroke-width="0.08">a3a3a300</text>
<text x="249.5" y="382" font-family="'Liberation Sans', sans-serif" font-size="25" fill="#000" font-weight="normal" text-anchor="start" textLength="72" lengthAdjust="spacingAndGlyphs" stroke="#000" stroke-width="0.08">RGBA</text>
<line x1="203.3" y1="327" x2="246.6" y2="350" stroke="#2a2a2a" stroke-width="2"/>
<line x1="366" y1="327" x2="326.7" y2="350" stroke="#2a2a2a" stroke-width="2"/>
<rect x="501" y="114" width="336" height="438" rx="8" fill="#0a1a22" opacity="0.8" filter="url(#shadow)"/>
<rect x="502.5" y="113.5" width="331" height="434.5" rx="7" fill="url(#frameside)" stroke="#1a2a34" stroke-width="1"/>
<path d="M503 140 V120 a6.5 6.5 0 0 1 6.5 -6.5 H827 a6.5 6.5 0 0 1 6.5 6.5 V140 Z" fill="url(#title)"/>
<rect x="503.5" y="114.5" width="329" height="432.5" rx="6" fill="none" stroke="#d8e6ef" stroke-width="1" opacity="0.7"/>
<path d="M734.5 114 V126 a4.5 4.5 0 0 0 4.5 4.5 H822 a4.5 4.5 0 0 0 4.5 -4.5 V114" fill="#a3bccd" stroke="#5a6e7c" stroke-width="1"/>
<path d="M735.5 114 V126 a3.5 3.5 0 0 0 3.5 3.5 H822 a3.5 3.5 0 0 0 3.5 -3.5 V114" fill="none" stroke="#d3e1ea" stroke-width="0.8"/>
<line x1="759.3" y1="114" x2="759.3" y2="130.5" stroke="#5a6e7c" stroke-width="1"/>
<line x1="784.4" y1="114" x2="784.4" y2="130.5" stroke="#5a6e7c" stroke-width="1"/>
<rect x="741.5" y="122.5" width="11" height="4" rx="1" fill="#f4f7fa" stroke="#38495a" stroke-width="0.9"/>
<rect x="766.5" y="117.5" width="11" height="9" fill="none" stroke="#38495a" stroke-width="1"/><rect x="768" y="119.5" width="8" height="5.5" fill="none" stroke="#f4f7fa" stroke-width="1.4"/>
<path d="M801.5 118.5 L810 125.5 M810 118.5 L801.5 125.5" stroke="#38495a" stroke-width="4"/><path d="M801.5 118.5 L810 125.5 M810 118.5 L801.5 125.5" stroke="#f4f7fa" stroke-width="2.2"/>
<path d="M517.5 119.2 L525.6 125.9 L517.5 129 L510.1 125.9 Z" fill="#111"/>
<path d="M517.5 121 L514 125 L517.5 124 Z" fill="#e8eef4"/><path d="M517.8 121.5 L523.5 125.8 L518.5 127.5 Z" fill="#2c4a7a"/>
<path d="M512.5 128.2 H523 L521 130.5 H519 L517.8 133.8 L516.5 130.5 H514 Z" fill="#111"/>
<circle cx="512.3" cy="131.8" r="0.8" fill="#111"/><circle cx="523.2" cy="131.2" r="0.8" fill="#111"/>
<text x="531.4" y="131.4" font-family="'Liberation Sans', sans-serif" font-size="12" fill="#44525f" font-weight="normal" text-anchor="start" textLength="198" lengthAdjust="spacingAndGlyphs" stroke="#44525f" stroke-width="0.1">Füllung und Kontur (Umschalt+Strg...</text>
<rect x="509.5" y="139.5" width="317" height="402" fill="#f0f0f0" stroke="#3f4f5b" stroke-width="1"/>
<path d="M511 157 V145.8 H522" fill="none" stroke="#111" stroke-width="1.3"/><path d="M510.3 158.8 L519 149 L523.5 145.8 L524.2 149.5 L516 157 Z" fill="#111"/><path d="M513 155.5 L519 150.5" stroke="#ccc" stroke-width="0.7"/><path d="M521.5 148 L524 145.5 L524 150.5 Z" fill="#f4b520"/>
<text x="525.5" y="155.7" font-family="'Liberation Sans', sans-serif" font-size="11.5" fill="#000" font-weight="normal" text-anchor="start" textLength="207" lengthAdjust="spacingAndGlyphs" stroke="#000" stroke-width="0.22">Füllung und Kontur (Umschalt+Strg+F)</text>
<rect x="787.5" y="146.5" width="10" height="10" rx="2" fill="#f4f4f4" stroke="#8a8a8a" stroke-width="1"/><path d="M790 151.5 L795 148.5 V154.5 Z" fill="#555"/>
<rect x="809.5" y="146.5" width="10.5" height="10" rx="2" fill="#f4f4f4" stroke="#8a8a8a" stroke-width="1"/><path d="M812 149 L817.5 154.5 M817.5 149 L812 154.5" stroke="#444" stroke-width="1.8"/>
<rect x="510" y="163" width="316" height="1" fill="#a0a0a0" />
<rect x="510" y="164" width="316" height="1" fill="#ffffff" />
<rect x="515.5" y="192.5" width="305" height="268.5" fill="#fff" stroke="#8c9097" stroke-width="1"/>
<rect x="580.5" y="170.5" width="114.5" height="22.5" fill="url(#tabbg)" stroke="#8c9097" stroke-width="1"/>
<rect x="696.5" y="170.5" width="124" height="22.5" fill="url(#tabbg)" stroke="#8c9097" stroke-width="1"/>
<path d="M515.5 193 V168.5 H580.5 V193" fill="#fff" stroke="#8c9097" stroke-width="1"/>
<rect x="516" y="192" width="64" height="2" fill="#fff" />
<rect x="520" y="174" width="16" height="16" fill="url(#linsoft)"/>
<text x="541.3" y="186" font-family="'Liberation Sans', sans-serif" font-size="11.5" fill="#000" font-weight="normal" text-anchor="start" textLength="31.5" lengthAdjust="spacingAndGlyphs" stroke="#000" stroke-width="0.22">Füllen</text>
<line x1="541.5" y1="188.5" x2="548" y2="188.5" stroke="#000" stroke-width="1"/>
<rect x="582" y="174.5" width="15.5" height="15.5" fill="#e6e6e6" stroke="url(#strokeic)" stroke-width="1.4"/>
<text x="603" y="186" font-family="'Liberation Sans', sans-serif" font-size="11.5" fill="#000" font-weight="normal" text-anchor="start" textLength="88.5" lengthAdjust="spacingAndGlyphs" stroke="#000" stroke-width="0.22">Farbe der Kontur</text>
<line x1="603" y1="188.5" x2="609.5" y2="188.5" stroke="#000" stroke-width="1"/>
<path d="M700 178.5 h11" stroke="#111" stroke-width="1.3"/><path d="M710 175.8 l3.8 2.7 l-3.8 2.7 z" fill="#111"/><path d="M700 184.5 h13" stroke="#111" stroke-width="1.3" stroke-dasharray="2 1.6"/><path d="M700 189 h13.5" stroke="#333" stroke-width="1.6"/>
<text x="719.4" y="186" font-family="'Liberation Sans', sans-serif" font-size="11.5" fill="#000" font-weight="normal" text-anchor="start" textLength="96" lengthAdjust="spacingAndGlyphs" stroke="#000" stroke-width="0.22">Muster der Kontur</text>
<line x1="719.5" y1="188.5" x2="728" y2="188.5" stroke="#000" stroke-width="1"/>
<path d="M534 212.5 L542.5 221 M542.5 212.5 L534 221" stroke="#000" stroke-width="2.3"/>
<rect x="558.5" y="207.5" width="19" height="19" fill="#9ab6d8" stroke="#000" stroke-width="1"/>
<rect x="583.5" y="203.5" width="29" height="27" rx="3.5" fill="#f4f4f4" stroke="#6b6b6b" stroke-width="1.1"/>
<rect x="588.5" y="207.5" width="19.5" height="19" fill="url(#lin)" stroke="#000" stroke-width="1"/>
<rect x="618.5" y="207.5" width="19.5" height="19" fill="url(#rad)" stroke="#000" stroke-width="1"/>
<rect x="648.5" y="207.5" width="19.5" height="19" fill="url(#diam)" stroke="#000" stroke-width="1"/>
<rect x="678.5" y="207.5" width="19.5" height="19" fill="#9ab6d8" stroke="#000" stroke-width="1"/><rect x="680.5" y="209.5" width="15" height="15" fill="#fff" stroke="#6a7a8a" stroke-width="0.6"/>
<path d="M713.2 213 Q713 208.6 717.7 208.6 Q722.6 208.6 722.6 212.3 Q722.6 214.6 720 216 Q717.8 217.2 717.8 220.2" fill="none" stroke="#000" stroke-width="4"/><rect x="715.8" y="221.2" width="4" height="4" fill="#000"/>
<path d="M777.3 212.9 Q775 209.5 772.5 210.3 Q770.3 211.5 770.5 215 Q771 221 777.3 223.8 Q783.6 221 784 215 Q784.2 211.5 782 210.3 Q779.5 209.5 777.3 212.9 Z M777.3 212.6 Q774 217 774.2 219.5 Q774.6 222 777.3 222 Q780 222 780.5 219.5 Q780.6 217 777.3 212.6 Z" fill="#000" fill-rule="evenodd"/>
<rect x="789.5" y="203.5" width="23.5" height="27" rx="3.5" fill="#f0f0f0" stroke="#6b6b6b" stroke-width="1.1"/>
<path d="M801.3 212.9 Q799 209.5 796.5 210.3 Q794.3 211.5 794.5 215 Q795 221 801.3 223.8 Q807.6 221 808 215 Q808.2 211.5 806 210.3 Q803.5 209.5 801.3 212.9 Z" fill="#000"/>
<text x="523.8" y="251.5" font-family="'Liberation Sans', sans-serif" font-size="11.5" fill="#000" font-weight="bold" text-anchor="start" textLength="112.5" lengthAdjust="spacingAndGlyphs" >Linearer Farbverlauf</text>
<rect x="519.5" y="263.5" width="297" height="163" fill="#fff" stroke="#828790" stroke-width="1"/>
<rect x="520" y="264" width="296" height="15" fill="url(#hdrbg)" />
<rect x="598" y="264" width="1" height="15" fill="#e3e4e6" />
<rect x="778" y="264" width="1" height="15" fill="#e3e4e6" />
<text x="522.5" y="277.4" font-family="'Liberation Sans', sans-serif" font-size="11.5" fill="#000" font-weight="normal" text-anchor="start" textLength="58.5" lengthAdjust="spacingAndGlyphs" stroke="#000" stroke-width="0.22">Farbverlauf</text>
<path d="M591 270 V276 L587 273 Z" fill="#000"/>
<text x="600.5" y="277.4" font-family="'Liberation Sans', sans-serif" font-size="11.5" fill="#000" font-weight="normal" text-anchor="start" textLength="32" lengthAdjust="spacingAndGlyphs" stroke="#000" stroke-width="0.22">Name</text>
<text x="780.3" y="277" font-family="'Liberation Sans', sans-serif" font-size="11.5" fill="#000" font-weight="normal" text-anchor="start" stroke="#000" stroke-width="0.22">#</text>
<rect x="520" y="282" width="296" height="22.5" fill="#ececec" />
<rect x="528" y="284" width="64" height="18" fill="url(#chk6)"/>
<rect x="528" y="284" width="64" height="18" fill="url(#fadegray2)"/>
<text x="603.2" y="297.6" font-family="'Liberation Sans', sans-serif" font-size="11.5" fill="#000" font-weight="normal" text-anchor="start" textLength="23.5" lengthAdjust="spacingAndGlyphs" stroke="#000" stroke-width="0.22">5261</text>
<text x="782.5" y="298" font-family="'Liberation Sans', sans-serif" font-size="11.5" fill="#000" font-weight="normal" text-anchor="start" stroke="#000" stroke-width="0.22">1</text>
<path d="M530.2 438.6 H534 V443.2 H538.6 V446.9 H534 V451.6 H530.2 V446.9 H525.4 V443.2 H530.2 Z" fill="#93b7e2" stroke="#1f4d96" stroke-width="1.2"/>
<path d="M553.5 437.5 h9.5 l4 3.5 v11.5 h-13.5 z" fill="#f8f8f8" stroke="#777" stroke-width="1"/>
<path d="M556 441.5 h7 M556 444 h8 M556 446.5 h6 M556 449 h5" stroke="#c8c8c8" stroke-width="0.8"/>
<path d="M557 449.5 L565.5 440.5 L567.5 442.5 L559 451.3 L557 451.7 Z" fill="#f0a830" stroke="#8a5a10" stroke-width="0.7"/>
<circle cx="566.8" cy="440.8" r="1.8" fill="#d02020"/>
<rect x="515.5" y="466.5" width="293.5" height="22.5" fill="#fff" stroke="#c6c6c6" stroke-width="1"/>
<text x="521.8" y="481.2" font-family="'Liberation Sans', sans-serif" font-size="11.5" fill="#000" font-weight="normal" text-anchor="start" textLength="73.5" lengthAdjust="spacingAndGlyphs" stroke="#000" stroke-width="0.22">Unschärfe (%)</text>
<text x="789.8" y="482.5" font-family="'Liberation Sans', sans-serif" font-size="11.5" fill="#000" font-weight="normal" text-anchor="start" textLength="15" lengthAdjust="spacingAndGlyphs" stroke="#000" stroke-width="0.22">0,0</text>
<rect x="810.5" y="467.5" width="9" height="10" fill="url(#spinbtn)" stroke="#c8c8c8" stroke-width="1"/><rect x="810.5" y="477.5" width="9" height="11" fill="url(#spinbtn)" stroke="#c8c8c8" stroke-width="1"/>
<path d="M812.5 474 L815 470.5 L817.5 474 Z" fill="#5060a0"/><path d="M812.5 481.5 L815 485 L817.5 481.5 Z" fill="#909090"/>
<rect x="515.5" y="494.5" width="293.5" height="22.5" fill="#fff" stroke="#c6c6c6" stroke-width="1"/>
<rect x="518" y="496.5" width="289" height="19" fill="url(#deckbar)" />
<rect x="518" y="514.5" width="289" height="1.2" fill="#3a2a2a" />
<rect x="806" y="496.5" width="1" height="19" fill="#000" />
<text x="521.5" y="509" font-family="'Liberation Sans', sans-serif" font-size="11.5" fill="#000" font-weight="normal" text-anchor="start" textLength="70.5" lengthAdjust="spacingAndGlyphs" stroke="#000" stroke-width="0.22">Deckkraft (%)</text>
<text x="777.9" y="509.9" font-family="'Liberation Sans', sans-serif" font-size="11.5" fill="#000" font-weight="normal" text-anchor="start" textLength="27" lengthAdjust="spacingAndGlyphs" stroke="#000" stroke-width="0.22">100,0</text>
<rect x="810.5" y="495.5" width="9" height="10" fill="url(#spinbtn)" stroke="#c8c8c8" stroke-width="1"/><rect x="810.5" y="505.5" width="9" height="11" fill="url(#spinbtn)" stroke="#c8c8c8" stroke-width="1"/>
<path d="M812.5 502 L815 498.5 L817.5 502 Z" fill="#909090"/><path d="M812.5 509.5 L815 513 L817.5 509.5 Z" fill="#5060a0"/>
<rect x="677.5" y="31.5" width="118" height="67.5" fill="#fff" stroke="#9a9a9a" stroke-width="1"/>
<rect x="679" y="33.5" width="115" height="23" fill="#ececec" />
<rect x="686" y="37.3" width="31.7" height="15.4" fill="#a3a3a3" />
<text x="727.3" y="50" font-family="'Liberation Sans', sans-serif" font-size="11.5" fill="#000" font-weight="normal" text-anchor="start" textLength="46.5" lengthAdjust="spacingAndGlyphs" stroke="#000" stroke-width="0.22">stop5263</text>
<rect x="686" y="60.3" width="31.7" height="15" fill="#a3a3a3" />
<rect x="686.0" y="60.3" width="5.3" height="5" fill="#8c8c8c" />
<rect x="686.0" y="65.3" width="5.3" height="5" fill="#bcbcbc" />
<rect x="686.0" y="70.3" width="5.3" height="5" fill="#8c8c8c" />
<rect x="691.3" y="60.3" width="5.3" height="5" fill="#bcbcbc" />
<rect x="691.3" y="65.3" width="5.3" height="5" fill="#8c8c8c" />
<rect x="691.3" y="70.3" width="5.3" height="5" fill="#bcbcbc" />
<rect x="696.6" y="60.3" width="5.3" height="5" fill="#8c8c8c" />
<rect x="696.6" y="65.3" width="5.3" height="5" fill="#bcbcbc" />
<rect x="696.6" y="70.3" width="5.3" height="5" fill="#8c8c8c" />
<text x="727.3" y="72.9" font-family="'Liberation Sans', sans-serif" font-size="11.5" fill="#000" font-weight="normal" text-anchor="start" textLength="46.5" lengthAdjust="spacingAndGlyphs" stroke="#000" stroke-width="0.22">stop5265</text>
<rect x="679" y="81.8" width="115" height="15.5" fill="#eaeaea" />
<path d="M689.5 86.5 V92.5 L686.5 89.5 Z" fill="#aaa"/><path d="M784.5 86.5 V92.5 L787.5 89.5 Z" fill="#333"/>
<rect x="697.5" y="82.5" width="64" height="13.5" rx="2" fill="url(#scrthumb)" stroke="#979797" stroke-width="1"/>
<path d="M725.5 86 v6 M728 86 v6 M730.5 86 v6" stroke="#555" stroke-width="1"/>
<rect x="2.5" y="3" width="619" height="41.8" fill="none" stroke="#c00d12" stroke-width="3.2"/>
<rect x="621" y="3" width="181.8" height="99.8" fill="none" stroke="#c00d12" stroke-width="3.2"/>
<rect x="1.5" y="549.5" width="34" height="33" fill="none" stroke="#c00d12" stroke-width="3.2"/>
<rect x="581" y="196.2" width="35.8" height="40.2" fill="none" stroke="#c00d12" stroke-width="3.2"/>
<rect x="519.3" y="280.5" width="297.6" height="29.4" fill="none" stroke="#c00d12" stroke-width="3.2"/>
</svg>
</body></html>
